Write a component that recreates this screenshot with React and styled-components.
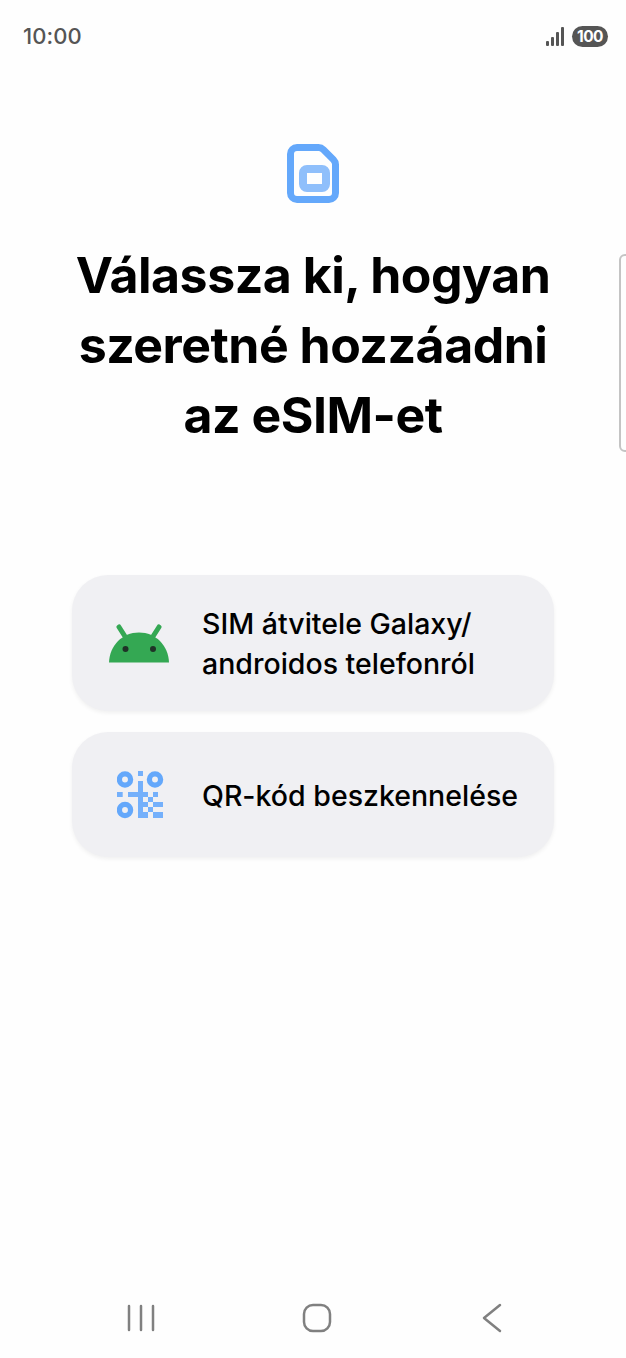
import React from 'react';
import styled, {createGlobalStyle} from 'styled-components';

const GlobalStyle = createGlobalStyle`
  html, body {
    margin: 0;
    padding: 0;
    background: #fff;
  }
`;

const Screen = styled.div`
  position: relative;
  width: 626px;
  height: 1358px;
  overflow: hidden;
  display: flex;
  flex-direction: column;
  background: #fefefe;
  font-family: Inter, "Noto Sans", sans-serif;
`;

const StatusBar = styled.div`
  height: 72px;
  box-sizing: border-box;
  padding: 0 18px 0 23px;
  display: flex;
  align-items: center;
  justify-content: space-between;
`;

const Clock = styled.div`
  color: #555;
  font-size: 22px;
  font-weight: 500;
  letter-spacing: 0.1px;
`;

const StatusIcons = styled.div`
  display: flex;
  align-items: center;
  gap: 7px;
`;

const Battery = styled.div`
  width: 36px;
  height: 21px;
  border-radius: 11px;
  background: #555;
  color: #fff;
  font-size: 15.5px;
  font-weight: 700;
  letter-spacing: -0.5px;
  display: flex;
  align-items: center;
  justify-content: center;
`;

const Content = styled.main`
  display: flex;
  flex-direction: column;
  align-items: center;
  padding-top: 72px;
`;

const Title = styled.h1`
  margin: 37px 0 0;
  color: #000;
  font-size: 50px;
  font-weight: 700;
  line-height: 70px;
  letter-spacing: -0.5px;
  text-align: center;
`;

const Options = styled.div`
  margin-top: 125px;
  width: 482px;
  display: flex;
  flex-direction: column;
  gap: 21px;
`;

const Option = styled.div`
  min-height: ${props => props.$height}px;
  box-sizing: border-box;
  border-radius: 36px;
  background: #f0f0f3;
  box-shadow: 0 2px 4px rgba(0, 0, 0, 0.06);
  display: flex;
  align-items: center;
`;

const OptionIcon = styled.div`
  width: 130px;
  flex: none;
  display: flex;
  justify-content: center;
  padding-left: ${props => props.$inset}px;
  box-sizing: border-box;
`;

const OptionLabel = styled.div`
  padding-top: 2px;
  color: #000;
  font-size: 28.5px;
  font-weight: 500;
  line-height: 40px;
`;

const NavBar = styled.nav`
  margin-top: auto;
  height: 80px;
  box-sizing: border-box;
  padding-left: 127px;
  display: grid;
  grid-template-columns: 175px 180px auto;
  align-items: center;
`;

const SideHandle = styled.div`
  position: absolute;
  top: 254px;
  left: 619px;
  width: 12px;
  height: 198px;
  box-sizing: border-box;
  border: 2px solid #c4c4c4;
  border-radius: 8px;
`;

const SignalIcon = () => (
  <svg width="19" height="19" viewBox="0 0 19 19" fill="#555">
    <rect x="0" y="14" width="3" height="5" rx="1" />
    <rect x="5" y="10" width="3" height="9" rx="1" />
    <rect x="10" y="5" width="3" height="14" rx="1" />
    <rect x="15" y="0" width="3" height="19" rx="1" />
  </svg>
);

const SimIcon = () => (
  <svg width="52" height="59" viewBox="0 0 52 59" fill="none">
    <path
      d="M10 3.500H31.500C33.500 3.500 35 4.200 36.400 5.600L46.400 15.600C47.800 17 48.500 18.500 48.500 20.500V49C48.500 52.600 45.600 55.500 42 55.500H10C6.400 55.500 3.500 52.600 3.500 49V10C3.500 6.400 6.400 3.500 10 3.500Z"
      stroke="#64a8fb"
      strokeWidth="7"
    />
    <rect x="16" y="25" width="23" height="19" rx="4" stroke="#8fbffb" strokeWidth="8" />
  </svg>
);

const AndroidIcon = () => (
  <svg width="62" height="39" viewBox="0 0 62 39">
    <path d="M1 38.500C1.500 22 14 8.500 31 8.500C48 8.500 60.500 22 61 38.500Z" fill="#34a853" />
    <path d="M11 3L18 14M51 3L44 14" stroke="#34a853" strokeWidth="5" strokeLinecap="round" />
    <circle cx="17.500" cy="25" r="3" fill="#1f3327" />
    <circle cx="45" cy="25" r="3" fill="#1f3327" />
  </svg>
);

const QrIcon = () => (
  <svg width="48" height="48" viewBox="0 0 48 48">
    <g fill="none" stroke="#64a8fb" strokeWidth="5.300">
      <circle cx="8" cy="8.500" r="5.600" />
      <circle cx="38" cy="8.500" r="5.600" />
      <circle cx="8" cy="39" r="5.600" />
    </g>
    <g fill="#74b0fb">
      <rect x="21" y="0" width="5" height="5" />
      <rect x="21" y="10" width="5" height="37" />
      <rect x="0" y="21" width="5.700" height="5" />
      <rect x="11" y="21" width="10" height="5" />
      <rect x="26" y="21" width="5" height="5" />
      <rect x="36" y="21" width="5" height="5" />
      <rect x="31" y="26" width="5" height="5" />
      <rect x="26" y="31" width="5" height="5" />
      <rect x="36" y="31" width="10" height="5" />
      <rect x="31" y="36" width="5" height="5" />
      <rect x="26" y="41" width="5" height="6" />
      <rect x="36" y="41" width="10" height="6" />
    </g>
  </svg>
);

const RecentsIcon = () => (
  <svg width="28" height="28" viewBox="0 0 28 28" stroke="#808080" strokeWidth="2.500" strokeLinecap="round">
    <path d="M2 2V26M14 2V26M26 2V26" />
  </svg>
);

const HomeIcon = () => (
  <svg width="30" height="30" viewBox="0 0 30 30" fill="none">
    <rect x="2" y="2" width="26" height="26" rx="9" stroke="#808080" strokeWidth="2.500" />
  </svg>
);

const BackIcon = () => (
  <svg width="20" height="30" viewBox="0 0 20 30" fill="none">
    <path d="M18 2L2 15L18 28" stroke="#808080" strokeWidth="2.500" strokeLinecap="round" strokeLinejoin="round" />
  </svg>
);

const App = () => (
  <Screen>
    <GlobalStyle />
    <StatusBar>
      <Clock>10:00</Clock>
      <StatusIcons>
        <SignalIcon />
        <Battery>100</Battery>
      </StatusIcons>
    </StatusBar>
    <Content>
      <SimIcon />
      <Title>
        Válassza ki, hogyan
        <br />
        szeretné hozzáadni
        <br />
        az eSIM-et
      </Title>
      <Options>
        <Option $height={136}>
          <OptionIcon $inset={4}>
            <AndroidIcon />
          </OptionIcon>
          <OptionLabel>
            SIM átvitele Galaxy/
            <br />
            androidos telefonról
          </OptionLabel>
        </Option>
        <Option $height={125}>
          <OptionIcon $inset={7}>
            <QrIcon />
          </OptionIcon>
          <OptionLabel>QR-kód beszkennelése</OptionLabel>
        </Option>
      </Options>
    </Content>
    <NavBar>
      <RecentsIcon />
      <HomeIcon />
      <BackIcon />
    </NavBar>
    <SideHandle />
  </Screen>
);

export default App;
